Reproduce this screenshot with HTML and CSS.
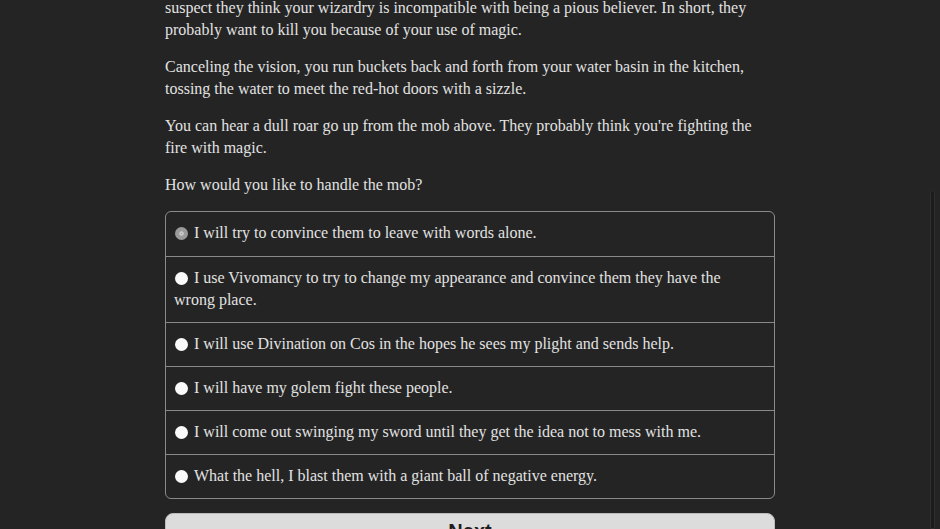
FILE: index.html
```html
<!DOCTYPE html>
<html lang="en">
<head>
    <meta charset="UTF-8">
    <meta name="viewport" content="width=device-width, initial-scale=1.0">
    <title>The Mob</title>
    <link rel="stylesheet" href="styles.css">
</head>
<body>
    <div class="story">
        <p class="first">suspect they think your wizardry is incompatible with being a pious believer. In short, they probably want to kill you because of your use of magic.</p>
        <p>Canceling the vision, you run buckets back and forth from your water basin in the kitchen, tossing the water to meet the red-hot doors with a sizzle.</p>
        <p>You can hear a dull roar go up from the mob above. They probably think you're fighting the fire with magic.</p>
        <p>How would you like to handle the mob?</p>

        <form class="choices" id="choices">
            <label class="choice"><input type="radio" name="mob" value="1" checked><span>I will try to convince them to leave with words alone.</span></label>
            <label class="choice"><input type="radio" name="mob" value="2"><span>I use Vivomancy to try to change my appearance and convince them they have the wrong place.</span></label>
            <label class="choice"><input type="radio" name="mob" value="3"><span>I will use Divination on Cos in the hopes he sees my plight and sends help.</span></label>
            <label class="choice"><input type="radio" name="mob" value="4"><span>I will have my golem fight these people.</span></label>
            <label class="choice"><input type="radio" name="mob" value="5"><span>I will come out swinging my sword until they get the idea not to mess with me.</span></label>
            <label class="choice"><input type="radio" name="mob" value="6"><span>What the hell, I blast them with a giant ball of negative energy.</span></label>
        </form>

        <button class="next" type="button">Next</button>
    </div>
    <div class="scroll-thumb"></div>
</body>
</html>
```
FILE: styles.css
```css
*{
    margin: 0;
    padding: 0;
    box-sizing: border-box;
}
html,body{
    height: 100%;
    overflow: hidden;
}
body{
    background-color: #242424;
    color: #e2e2e2;
    font-family: "Liberation Serif", "DejaVu Serif", serif;
    font-size: 16px;
    line-height: 22px;
}
.story{
    width: 610px;
    margin-left: 165px;
}
.story p{
    margin-bottom: 15px;
}
.story p.first{
    margin-top: -3px;
}
.choices{
    margin-top: 4px;
    border: 1px solid #8a8a8a;
    border-radius: 6px;
    overflow: hidden;
}
.choice{
    display: block;
    padding: 10px 40px 11px 8px;
    border-top: 1px solid #8a8a8a;
    cursor: pointer;
}
.choice:first-child{
    border-top: none;
    padding-bottom: 12px;
}
.choice input{
    -webkit-appearance: none;
    appearance: none;
    display: inline-block;
    width: 13px;
    height: 13px;
    border-radius: 50%;
    background-color: #fafafa;
    margin: 5px 6px 0 1px;
    vertical-align: top;
}
.choice input:checked{
    background-color: #8c8c8c;
    border: 4px solid #9a9a9a;
    box-shadow: inset 0 0 0 2px #c8c8c8;
}
.next{
    display: block;
    width: 100%;
    height: 40px;
    margin-top: 14px;
    background-color: #dcdcdc;
    border: 1px solid #bcbcbc;
    border-radius: 8px;
    color: #1e1e1e;
    font-family: "Liberation Sans", Arial, sans-serif;
    font-size: 20px;
    font-weight: bold;
    padding-bottom: 4px;
}
.scroll-thumb{
    position: fixed;
    right: 5px;
    top: 190px;
    bottom: 0;
    width: 5px;
    border-radius: 3px 3px 0 0;
    background-color: #1c1c1c;
    border: 1px solid #2e2e2e;
}
```
